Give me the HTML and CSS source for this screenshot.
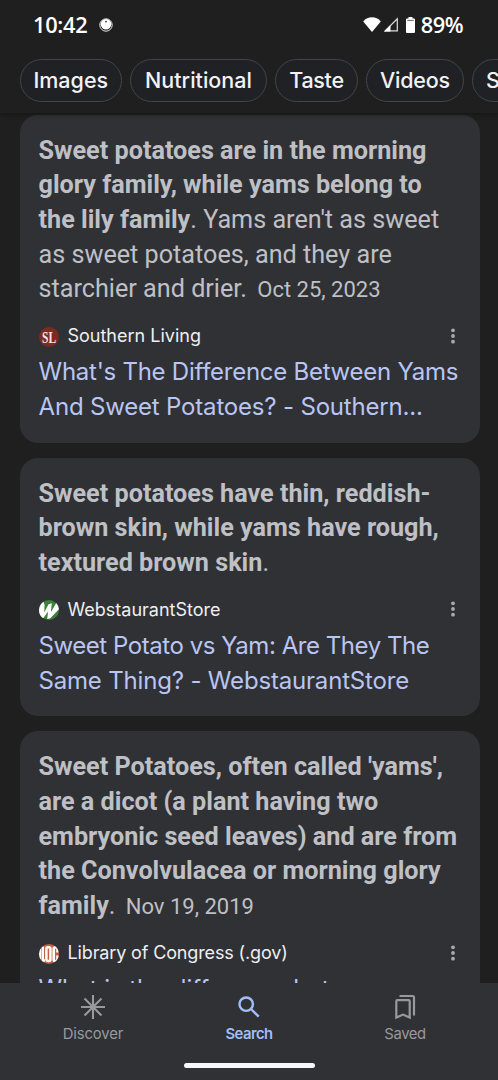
FILE: index.html
```html
<!DOCTYPE html>
<html lang="en">
<head>
<meta charset="utf-8">
<title>Search</title>
<link rel="stylesheet" href="styles.css">
</head>
<body>
<div class="screen">
  <header class="top">
    <div class="status">
      <div class="status-left">
        <span class="clock">10:42</span>
        <svg class="status-dot" viewBox="0 0 14 14"><circle cx="7" cy="7" r="6.2" fill="none" stroke="#fff" stroke-width=".9"/><circle cx="7" cy="6.3" r="5.3" fill="#fff"/><circle cx="7" cy="3.6" r=".9" fill="#333"/></svg>
      </div>
      <div class="status-right">
        <svg class="wifi" viewBox="0 0 18 15"><path d="M9 15 .2 4.4C2.6 1.7 5.600.3 9 .3s6.400 1.400 8.800 4.100z" fill="#fff"/></svg>
        <svg class="signal" viewBox="0 0 16 15"><path d="M14.300 1.800V13.900H2.200z" fill="none" stroke="#ddd" stroke-width="1.200"/><path d="M1 14.400 7.500 7.900V14.400z" fill="#fff"/></svg>
        <svg class="battery" viewBox="0 0 9 16"><path d="M2.500 0h4v1.500H8a1 1 0 0 1 1 1V15a1 1 0 0 1-1 1H1a1 1 0 0 1-1-1V2.500a1 1 0 0 1 1-1h1.500z" fill="#fff"/><path d="M1.300 3.400h6.400" stroke="#555" stroke-width=".9"/></svg>
        <span class="percent">89%</span>
      </div>
    </div>
    <nav class="chips">
      <a class="chip chip-images">Images</a>
      <a class="chip chip-nutritional">Nutritional</a>
      <a class="chip chip-taste">Taste</a>
      <a class="chip chip-videos">Videos</a>
      <a class="chip chip-more">Shopping</a>
    </nav>
  </header>

  <main class="results">
    <article class="card">
      <p class="snippet"><b>Sweet potatoes are in the morning<br>glory family, while yams belong to<br>the lily family</b>. Yams aren't as sweet<br>as sweet potatoes, and they are<br>starchier and drier. <span class="date">Oct 25, 2023</span></p>
      <div class="source">
        <svg class="favicon" viewBox="0 0 20 20"><circle cx="10" cy="10" r="10" fill="#7d2a22"/><text class="mark-sl" transform="translate(3 16) scale(.72 1)">SL</text></svg>
        <span class="site">Southern Living</span>
        <svg class="menu" viewBox="0 0 4 16"><circle cx="2" cy="2.300" r="1.900"/><circle cx="2" cy="8" r="1.900"/><circle cx="2" cy="13.700" r="1.900"/></svg>
      </div>
      <h3 class="title"><span class="tight-1">What's The Difference Between Yams</span><br><span class="tight-2">And Sweet Potatoes? - Southern...</span></h3>
    </article>

    <article class="card">
      <p class="snippet"><b>Sweet potatoes have thin, reddish-<br>brown skin, while yams have rough,<br>textured brown skin</b>.</p>
      <div class="source">
        <svg class="favicon" viewBox="0 0 20 20"><circle cx="10" cy="10" r="10" fill="#3d8038"/><path d="M.2 8.500A10 10 0 0 1 4.500 1.700L5.600 5 5.200 12.500 9.500 4.300 12.800 3.200 11.900 12.300 17.200 3.100A10 10 0 0 1 19.900 9.200L11.300 18.300 8.200 19 9.100 11.600 4.200 18.200A10 10 0 0 1 .2 8.500z" fill="#fff"/></svg>
        <span class="site">WebstaurantStore</span>
        <svg class="menu" viewBox="0 0 4 16"><circle cx="2" cy="2.300" r="1.900"/><circle cx="2" cy="8" r="1.900"/><circle cx="2" cy="13.700" r="1.900"/></svg>
      </div>
      <h3 class="title"><span class="tight-3">Sweet Potato vs Yam: Are They The</span><br><span class="tight-2">Same Thing? - WebstaurantStore</span></h3>
    </article>

    <article class="card">
      <p class="snippet"><b>Sweet Potatoes, often called 'yams',<br>are a dicot (a plant having two<br>embryonic seed leaves) and are from<br>the Convolvulacea or morning glory<br>family</b>. <span class="date">Nov 19, 2019</span></p>
      <div class="source">
        <svg class="favicon" viewBox="0 0 20 20"><defs><clipPath id="disc"><circle cx="10" cy="10" r="10"/></clipPath></defs><circle cx="10" cy="10" r="10" fill="#c4603f"/><g clip-path="url(#disc)" fill="none" stroke="#fff"><path d="M.8 3V17M3.800 2.500V16.500H6" stroke-width="2.500"/><rect x="7.400" y="3.300" width="4" height="13.800" rx="1.500" stroke-width="2.500"/><path d="M18.500 8.500V5Q18.500 3.300 16.500 3.300T14.700 5V15.500Q14.700 17.200 16.500 17.200T18.500 15.500V11.500" stroke-width="2.600"/></g></svg>
        <span class="site site-loc">Library of Congress (.gov)</span>
        <svg class="menu" viewBox="0 0 4 16"><circle cx="2" cy="2.300" r="1.900"/><circle cx="2" cy="8" r="1.900"/><circle cx="2" cy="13.700" r="1.900"/></svg>
      </div>
      <h3 class="title"><span class="tight-4">What is the difference between</span></h3>
    </article>
  </main>

  <footer class="bottom">
    <nav class="tabs">
      <a class="tab">
        <svg class="tab-icon" viewBox="0 0 28 28" fill="none" stroke="currentColor" stroke-width="2.100"><path d="M14 2V26M2 14H26M5.500 5.500 22.500 22.500M22.500 5.500 5.500 22.500"/></svg>
        <span class="label-discover">Discover</span>
      </a>
      <a class="tab active">
        <svg class="tab-icon" viewBox="0 0 28 28" fill="none" stroke="currentColor" stroke-width="2.400"><circle cx="11.200" cy="11.200" r="6.700"/><path d="M16 16 23.700 23.700"/></svg>
        <span class="label-search">Search</span>
      </a>
      <a class="tab">
        <svg class="tab-icon" viewBox="0 0 28 28" fill="none" stroke="currentColor" stroke-width="2.200"><path d="M5.300 24.500V8.200a1 1 0 0 1 1-1H17.700a1 1 0 0 1 1 1V24.500L12 21.600z"/><path d="M8.500 3H21.500a1.500 1.500 0 0 1 1.500 1.500V22.500"/></svg>
        <span class="label-saved">Saved</span>
      </a>
    </nav>
    <div class="home-bar"></div>
  </footer>
</div>
</body>
</html>
```
FILE: styles.css
```css
* { box-sizing: border-box; }
body { margin: 0; background: #1f1f1f; font-family: Inter, "Liberation Sans", sans-serif; }
.screen { width: 498px; height: 1080px; display: flex; flex-direction: column; overflow: hidden; background: #1f1f1f; }

.top { flex: none; height: 113px; background: #1f1f1f; box-shadow: 0 1px 6px rgba(0, 0, 0, .35); z-index: 1; }
.status { height: 59px; padding: 0 35px 10px 33px; display: flex; justify-content: space-between; align-items: center; color: #fff; font: 600 21.8px/30px "Open Sans", sans-serif; letter-spacing: -.3px; }
.status-left, .status-right { display: flex; align-items: center; }
.clock, .percent { margin-top: 1px; }
.status-dot { width: 14px; height: 14px; margin: 1px 0 0 12px; }
.wifi { width: 18px; height: 15px; margin-right: 2px; }
.signal { width: 16px; height: 15px; margin-right: 7px; }
.battery { width: 9px; height: 16px; margin-right: 6px; }
.percent { letter-spacing: -.5px; }

.chips { display: flex; gap: 8px; padding-left: 19.5px; overflow: hidden; }
.chip { flex: none; height: 43px; padding-bottom: 2px; display: flex; align-items: center; justify-content: center; border: 1px solid #444548; border-radius: 22px; background: #202125; color: #f1f2f6; font-size: 21.5px; font-weight: 500; }
.chip-images { width: 102.5px; }
.chip-nutritional { width: 137px; }
.chip-taste { width: 83px; letter-spacing: -.3px; }
.chip-videos { width: 98px; letter-spacing: -.2px; }
.chip-more { justify-content: flex-start; padding-left: 13px; width: 130px; }

.results { flex: 1; min-height: 0; overflow: hidden; display: flex; flex-direction: column; gap: 15px; padding: 1.5px 18.5px 0 19.5px; }
.card { flex: none; padding: 19px 18px 18px 19px; border-radius: 18px; background: #303135; white-space: nowrap; }
.snippet { margin: 0 0 14.2px; font: 400 25.2px/34.7px Roboto, sans-serif; color: #bfc0c5; }
.snippet b { font-weight: 700; }
.date { font-size: 22px; line-height: 1; margin-left: 4px; }
.source { height: 30px; margin-bottom: 4px; display: flex; align-items: center; }
.favicon { width: 20px; height: 20px; margin: 1px 9px 0 0; flex: none; }
.mark-sl { font: 700 16px "Liberation Serif", serif; fill: #f3e4df; }
.site { flex: 1; font-size: 18px; line-height: 30px; color: #eeeff2; }
.site-loc { letter-spacing: -.14px; }
.menu { width: 4px; height: 16px; fill: #a9aaae; margin: -1px 6.5px 0 0; }
.title { margin: 0; font-size: 24px; font-weight: 400; line-height: 34.7px; color: #b9c5f3; }
.tight-1 { letter-spacing: -.26px; }
.tight-2 { letter-spacing: -.18px; }
.tight-3 { letter-spacing: -.45px; }
.tight-4 { letter-spacing: -.05px; }

.bottom { flex: none; height: 97px; background: #303135; z-index: 1; }
.tabs { display: flex; height: 80px; padding: 10px 15px 0; }
.tab { flex: 1; display: flex; flex-direction: column; align-items: center; color: #98999d; font-size: 14.8px; line-height: 26px; }
.tab-icon { width: 28px; height: 28px; }
.active { color: #a2bdf8; font-weight: 600; }
.label-discover { letter-spacing: -.1px; }
.label-search { letter-spacing: -.5px; }
.label-saved { letter-spacing: -.4px; }
.home-bar { width: 131px; height: 5px; margin: 0 auto; border-radius: 3px; background: #f7f7f7; }
```
